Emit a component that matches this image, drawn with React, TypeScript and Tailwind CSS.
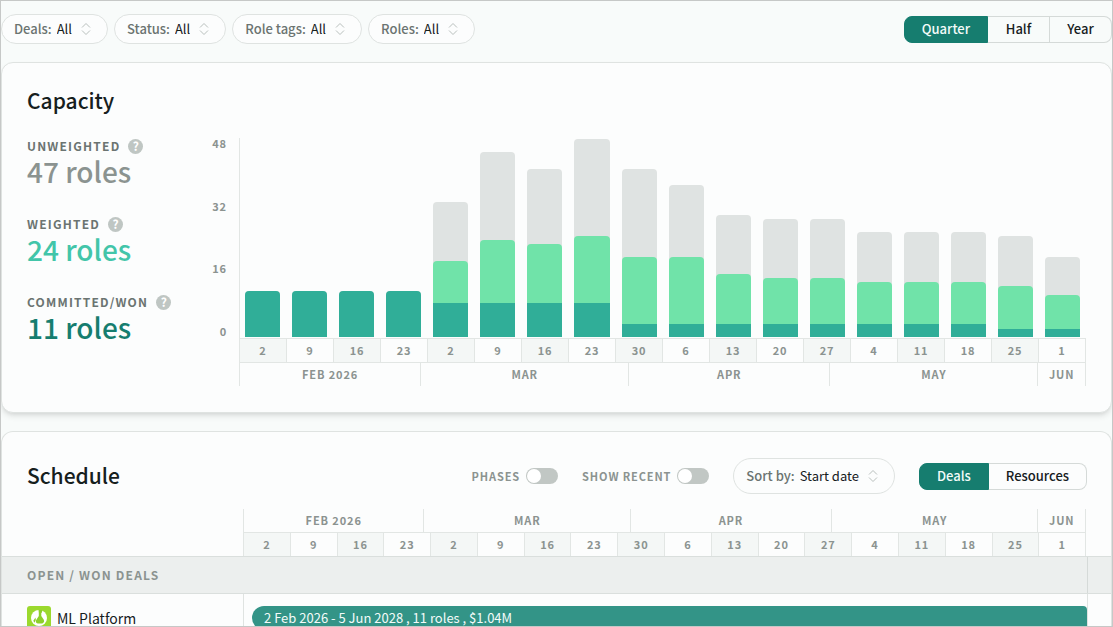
import { useState } from "react";

type Week = {
  day: number;
  unweighted: number;
  weighted: number;
  committed: number;
};

const weeks: Week[] = [
  { day: 2, unweighted: 11, weighted: 11, committed: 11 },
  { day: 9, unweighted: 11, weighted: 11, committed: 11 },
  { day: 16, unweighted: 11, weighted: 11, committed: 11 },
  { day: 23, unweighted: 11, weighted: 11, committed: 11 },
  { day: 2, unweighted: 32, weighted: 18, committed: 8 },
  { day: 9, unweighted: 44, weighted: 23, committed: 8 },
  { day: 16, unweighted: 40, weighted: 22, committed: 8 },
  { day: 23, unweighted: 47, weighted: 24, committed: 8 },
  { day: 30, unweighted: 40, weighted: 19, committed: 3 },
  { day: 6, unweighted: 36, weighted: 19, committed: 3 },
  { day: 13, unweighted: 29, weighted: 15, committed: 3 },
  { day: 20, unweighted: 28, weighted: 14, committed: 3 },
  { day: 27, unweighted: 28, weighted: 14, committed: 3 },
  { day: 4, unweighted: 25, weighted: 13, committed: 3 },
  { day: 11, unweighted: 25, weighted: 13, committed: 3 },
  { day: 18, unweighted: 25, weighted: 13, committed: 3 },
  { day: 25, unweighted: 24, weighted: 12, committed: 2 },
  { day: 1, unweighted: 19, weighted: 10, committed: 2 },
];

// days of each month that fall inside the visible range
const months = [
  { name: "FEB 2026", days: 27 },
  { name: "MAR", days: 31 },
  { name: "APR", days: 30 },
  { name: "MAY", days: 31 },
  { name: "JUN", days: 7 },
];

const peak = Math.max(...weeks.map((w) => w.unweighted));
const percent = (n: number) => `${(n / peak) * 100}%`;

function Sorter() {
  return (
    <svg
      viewBox="0 0 10 14"
      className="pointer-events-none h-[14px] w-[10px] shrink-0 fill-none stroke-[#b9c0bd]"
      aria-hidden="true"
    >
      <path d="M1 5.500 5 1.500l4 4M1 8.500l4 4 4-4" />
    </svg>
  );
}

function PillSelect({
  id,
  label,
  value,
  large,
}: {
  id: string;
  label: string;
  value: string;
  large?: boolean;
}) {
  return (
    <div
      className={`flex items-center rounded-full border border-[#dfe3e1] bg-[#fcfdfd] pl-3 pr-4 text-[13px] leading-5 ${
        large ? "h-9" : "h-[30px]"
      }`}
    >
      <label htmlFor={id} className="font-medium text-[#6b7471]">
        {label}:
      </label>
      <select
        id={id}
        defaultValue={value}
        className="ml-[5px] mr-[9px] appearance-none bg-transparent text-[#16201d] outline-none field-sizing-content"
      >
        <option>{value}</option>
      </select>
      <Sorter />
    </div>
  );
}

function Segmented({ options }: { options: string[] }) {
  const [active, setActive] = useState(options[0]);
  return (
    <div className="flex h-[27px] text-[13px] leading-5 font-medium">
      {options.map((option) => (
        <button
          key={option}
          type="button"
          aria-pressed={active === option}
          onClick={() => setActive(option)}
          className={`min-w-[62px] border-y border-r px-[17px] first:rounded-l-lg first:border-l last:rounded-r-lg ${
            active === option
              ? "border-[#167d6f] bg-[#167d6f] text-[#f3fbf9]"
              : "border-[#d5dad8] text-[#16201d]"
          }`}
        >
          {option}
        </button>
      ))}
    </div>
  );
}

function Toggle({ id, label }: { id: string; label: string }) {
  return (
    <div className="flex items-center gap-[6px]">
      <label
        htmlFor={id}
        className="text-[11px] leading-4 font-bold tracking-[0.08em] text-[#8b9390]"
      >
        {label}
      </label>
      <input
        id={id}
        type="checkbox"
        role="switch"
        className="h-4 w-8 appearance-none rounded-full bg-[#c1c7c4] p-px before:block before:size-[14px] before:rounded-full before:bg-white checked:bg-[#167d6f] checked:before:translate-x-4"
      />
    </div>
  );
}

function Stat({
  label,
  value,
  color,
}: {
  label: string;
  value: string;
  color: string;
}) {
  return (
    <div>
      <div className="flex items-center gap-2">
        <h3 className="text-[12px] leading-4 font-bold tracking-[0.1em] text-[#6b7471]">
          {label}
        </h3>
        <button
          type="button"
          aria-label={`About ${label.toLowerCase()}`}
          className="flex size-[15px] items-center justify-center rounded-full bg-[#bfc6c3] text-[12px] leading-none font-bold text-white"
        >
          ?
        </button>
      </div>
      <p className={`text-[28px] leading-[34px] font-medium ${color}`}>
        {value}
      </p>
    </div>
  );
}

function WeekRow() {
  return (
    <div className="flex border-t border-[#e2e6e4]">
      {weeks.map((week, i) => (
        <div
          key={i}
          className="h-[23px] flex-1 basis-0 border-l border-[#e2e6e4] text-center text-[11px] leading-[22px] font-bold tracking-[0.08em] first:border-l-0 odd:bg-[#f4f7f6]"
        >
          {week.day}
        </div>
      ))}
    </div>
  );
}

function MonthRow() {
  return (
    <div className="flex">
      {months.map((month) => (
        <div
          key={month.name}
          style={{ flexGrow: month.days }}
          className="h-[23px] basis-0 border-l border-[#e2e6e4] text-center text-[11px] leading-[22px] font-bold tracking-[0.08em] whitespace-nowrap first:border-l-0"
        >
          {month.name}
        </div>
      ))}
    </div>
  );
}

function Bar({ week }: { week: Week }) {
  return (
    <div className="flex flex-1 basis-0 items-end px-[6px]">
      <div className="grid h-full w-full items-end">
        <div
          style={{ height: percent(week.unweighted) }}
          className="col-start-1 row-start-1 rounded-t-[4px] bg-[#dfe3e2]"
        />
        <div
          style={{ height: percent(week.weighted) }}
          className="col-start-1 row-start-1 flex flex-col justify-end overflow-hidden rounded-t-[4px] bg-[#70e3a9]"
        >
          <div
            style={{ height: `${(week.committed / week.weighted) * 100}%` }}
            className="bg-[#30ae98]"
          />
        </div>
      </div>
    </div>
  );
}

function Capacity() {
  return (
    <section className="rounded-xl border border-[#dfe3e1] bg-[#fcfdfd] px-[25px] pb-[26px] shadow-md">
      <h2 className="pt-[23px] text-[21px] leading-7 font-medium text-[#16201d]">
        Capacity
      </h2>
      <div className="flex pt-6">
        <div className="flex w-[180px] shrink-0 flex-col gap-7">
          <Stat label="UNWEIGHTED" value="47 roles" color="text-[#8b9390]" />
          <Stat label="WEIGHTED" value="24 roles" color="text-[#42c5a9]" />
          <Stat label="COMMITTED/WON" value="11 roles" color="text-[#167d6f]" />
        </div>
        <div className="flex h-[200px] w-8 shrink-0 flex-col justify-between pr-3 pb-[2px] text-right text-[11px] leading-[10px] font-bold tracking-[0.08em] text-[#8b9390]">
          <span>48</span>
          <span>32</span>
          <span>16</span>
          <span>0</span>
        </div>
        <div className="flex-1 border-l border-[#e2e6e4] text-[#8b9390]">
          <div className="-ml-px flex h-[200px] py-px">
            {weeks.map((week, i) => (
              <Bar key={i} week={week} />
            ))}
          </div>
          <div className="border-r border-[#e2e6e4]">
            <WeekRow />
            <div className="border-t border-[#e2e6e4]">
              <MonthRow />
            </div>
          </div>
        </div>
      </div>
    </section>
  );
}

function DealLogo() {
  return (
    <svg viewBox="0 0 24 24" className="size-6 shrink-0" aria-hidden="true">
      <rect width="24" height="24" rx="3" fill="#9bd92e" />
      <circle cx="12" cy="12" r="8" fill="#fff" />
      <path
        d="M11.500 4h4l-.6 2.400-.6.600v3l2.500 3.800c.9 1.600.1 3.200-1.500 3.600h-4.600c-1.700-.4-2.300-2-1.500-3.500l2.600-3.900V7z"
        fill="#8ccf2a"
      />
      <path d="m8.500 11.500-2.200 3.200 1.200 2 1.300-2.800z" fill="#8ccf2a" />
    </svg>
  );
}

function Schedule() {
  return (
    <section className="rounded-t-xl border border-b-0 border-[#dfe3e1] bg-[#fcfdfd]">
      <div className="flex items-center justify-between pt-[26px] pr-6 pl-[25px]">
        <h2 className="pb-[2px] text-[21px] leading-7 font-medium text-[#16201d]">
          Schedule
        </h2>
        <div className="flex items-center gap-6">
          <Toggle id="phases" label="PHASES" />
          <Toggle id="recent" label="SHOW RECENT" />
          <PillSelect id="sort" label="Sort by" value="Start date" large />
          <Segmented options={["Deals", "Resources"]} />
        </div>
      </div>
      <div className="mt-[15px] mr-[25px] ml-[241px] border-x border-[#e2e6e4] text-[#8b9390]">
        <MonthRow />
        <WeekRow />
      </div>
      <div className="flex border-y border-[#dadfdd] bg-[#ecefee]">
        <h3 className="flex-1 border-r border-[#d5dad8] pl-[25px] text-[12px] leading-9 font-bold tracking-[0.1em] text-[#8b9390]">
          OPEN / WON DEALS
        </h3>
        <div className="w-[23px]" />
      </div>
      <div className="flex pr-[23px]">
        <div className="flex w-[241px] shrink-0 items-start gap-[6px] pt-3 pl-[25px] text-[14px] leading-6 text-[#16201d]">
          <DealLogo />
          ML Platform
        </div>
        <div className="flex-1 border-x border-[#dfe3e1] py-3 pl-2">
          <div className="rounded-l-xl rounded-r-sm bg-[#339487] pl-3 text-[13px] leading-6 text-[#f3fbf9]">
            2 Feb 2026 - 5 Jun 2028 , 11 roles , $1.04M
          </div>
        </div>
      </div>
    </section>
  );
}

export default function App() {
  return (
    <main className="h-screen overflow-hidden border border-[#c6c8c7] bg-[#f8fbfa] font-['Noto_Sans_CJK_JP',sans-serif]">
      <div className="flex items-center justify-between pt-[13px] pb-[18px]">
        <div className="flex gap-[6px]">
          <PillSelect id="deals" label="Deals" value="All" />
          <PillSelect id="status" label="Status" value="All" />
          <PillSelect id="tags" label="Role tags" value="All" />
          <PillSelect id="roles" label="Roles" value="All" />
        </div>
        <Segmented options={["Quarter", "Half", "Year"]} />
      </div>
      <div className="flex flex-col gap-[18px]">
        <Capacity />
        <Schedule />
      </div>
    </main>
  );
}
